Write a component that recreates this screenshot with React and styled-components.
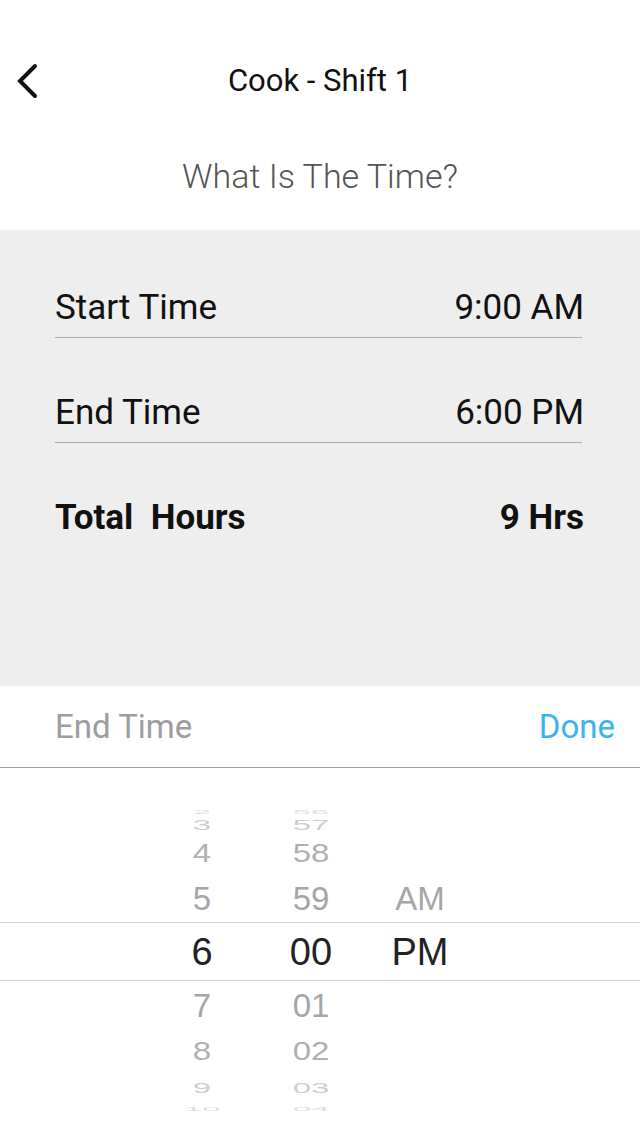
import styled, { createGlobalStyle } from "styled-components";

const GlobalStyle = createGlobalStyle`
  html, body {
    margin: 0;
    padding: 0;
    background: #ffffff;
  }
  body {
    font-family: Roboto, "Liberation Sans", sans-serif;
  }
`;

const Screen = styled.div`
  width: 640px;
  height: 1136px;
  overflow: hidden;
  display: flex;
  flex-direction: column;
  background: #ffffff;
`;

const NavBar = styled.div`
  margin-top: 40px;
  height: 82px;
  display: flex;
  align-items: center;
  justify-content: center;
  position: relative;
`;

const BackButton = styled.button`
  position: absolute;
  left: 16px;
  top: 23px;
  width: 24px;
  height: 36px;
  padding: 0;
  border: none;
  background: transparent;
  display: flex;
`;

const Title = styled.h1`
  margin: 0;
  font-size: 31px;
  font-weight: 400;
  color: #111;
  line-height: 40px;
`;

const Question = styled.div`
  height: 108px;
  display: flex;
  align-items: center;
  justify-content: center;
  font-size: 34px;
  font-weight: 300;
  color: #555;
`;

const Panel = styled.div`
  height: 456px;
  background: #eeeeee;
  padding: 58px 58px 0 55px;
  box-sizing: border-box;
  display: flex;
  flex-direction: column;
  gap: 55px;
`;

const Row = styled.div`
  display: flex;
  justify-content: space-between;
  align-items: center;
  line-height: 40px;
  padding-bottom: ${({ $lined }) => ($lined ? "9px" : "0")};
  border-bottom: ${({ $lined }) => ($lined ? "1px solid #acacac" : "none")};
  font-size: 35px;
  font-weight: ${({ $bold }) => ($bold ? 700 : 400)};
  color: #111;
`;

const Value = styled.span`
  margin-right: -2px;
`;

const Toolbar = styled.div`
  height: 82px;
  box-sizing: border-box;
  border-bottom: 1px solid #9c9c9c;
  display: flex;
  align-items: center;
  justify-content: space-between;
  padding: 0 25px 0 55px;
  font-size: 33px;
`;

const ToolbarLabel = styled.span`
  color: #9d9d9d;
`;

const DoneButton = styled.button`
  border: none;
  background: transparent;
  padding: 0;
  font-family: inherit;
  font-size: 33px;
  color: #3bb3f0;
`;

const Picker = styled.div`
  padding-top: 28px;
  display: flex;
  flex-direction: column;
  font-family: "Liberation Sans", Arial, sans-serif;
`;

const PickerRow = styled.div`
  height: ${({ $h }) => $h}px;
  display: grid;
  grid-template-columns: 80px 80px 80px;
  column-gap: 29px;
  padding-left: 162px;
  align-items: center;
  box-sizing: border-box;
  border-top: ${({ $selected }) => ($selected ? "1px solid #d2d2d2" : "none")};
  border-bottom: ${({ $selected }) => ($selected ? "1px solid #d2d2d2" : "none")};
`;

const Cell = styled.span`
  text-align: center;
  font-size: ${({ $selected }) => ($selected ? 38 : 33)}px;
  line-height: 1;
  color: ${({ $selected, $tone }) => ($selected ? "#222" : $tone)};
  transform: scaleY(${({ $scale }) => $scale});
`;

const rows = [
  { h: 12, scale: 0.15, tone: "#dedede", cells: ["2", "56", ""] },
  { h: 22, scale: 0.45, tone: "#cdcdcd", cells: ["3", "57", ""] },
  { h: 44, scale: 0.8, tone: "#b0b0b0", cells: ["4", "58", ""] },
  { h: 48, scale: 1, tone: "#a6a6a6", cells: ["5", "59", "AM"] },
  { h: 59, scale: 1, selected: true, cells: ["6", "00", "PM"] },
  { h: 48, scale: 1, tone: "#a6a6a6", cells: ["7", "01", ""] },
  { h: 42, scale: 0.8, tone: "#b0b0b0", cells: ["8", "02", ""] },
  { h: 22, scale: 0.45, tone: "#cdcdcd", cells: ["9", "03", ""] },
  { h: 12, scale: 0.15, tone: "#dedede", cells: ["10", "04", ""] },
];

const ChevronLeft = () => (
  <svg width="24" height="36" viewBox="0 0 24 36">
    <path
      d="M19 3 L4 18 L19 33"
      fill="none"
      stroke="#111"
      strokeWidth="4"
      strokeLinecap="round"
      strokeLinejoin="miter"
    />
  </svg>
);

export default function App() {
  return (
    <Screen>
      <GlobalStyle />
      <NavBar>
        <BackButton>
          <ChevronLeft />
        </BackButton>
        <Title>Cook - Shift 1</Title>
      </NavBar>
      <Question>What Is The Time?</Question>
      <Panel>
        <Row $lined>
          <span>Start Time</span>
          <Value>9:00 AM</Value>
        </Row>
        <Row $lined>
          <span>End Time</span>
          <Value>6:00 PM</Value>
        </Row>
        <Row $bold>
          <span>Total&nbsp; Hours</span>
          <Value>9 Hrs</Value>
        </Row>
      </Panel>
      <Toolbar>
        <ToolbarLabel>End Time</ToolbarLabel>
        <DoneButton>Done</DoneButton>
      </Toolbar>
      <Picker>
        {rows.map((row, i) => (
          <PickerRow key={i} $h={row.h} $selected={row.selected}>
            {row.cells.map((c, j) => (
              <Cell key={j} $selected={row.selected} $tone={row.tone} $scale={row.scale}>
                {c}
              </Cell>
            ))}
          </PickerRow>
        ))}
      </Picker>
    </Screen>
  );
}
